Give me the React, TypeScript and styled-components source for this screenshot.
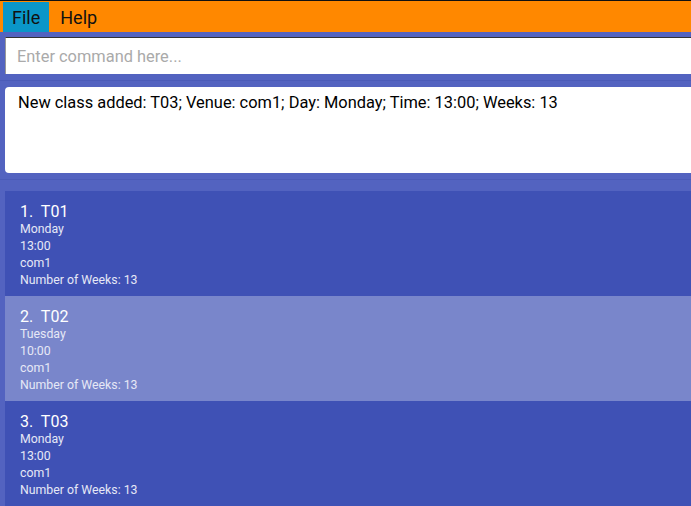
import React from "react";
import styled, { createGlobalStyle } from "styled-components";

const Global = createGlobalStyle`
  html, body { margin: 0; padding: 0; background: #5363c0; overflow: hidden; }
  body { font-family: Roboto, "Open Sans", sans-serif; }
`;

const Page = styled.div`
  width: 691px;
  height: 506px;
  display: flex;
  flex-direction: column;
  background: #5363c0;
  border-top: 1px solid #111;
  box-sizing: border-box;
  overflow: hidden;
`;

const MenuBar = styled.div`
  height: 30px;
  background: #ff8800;
  display: flex;
  align-items: stretch;
  padding-left: 3px;
  padding-top: 1px;
`;

const MenuItem = styled.div<{ $active?: boolean }>`
  display: flex;
  align-items: center;
  padding: 0 9px;
  margin-right: 2px;
  font-size: 18px;
  color: #111;
  background: ${(p) => (p.$active ? "#0a96c8" : "transparent")};
`;

const Section = styled.div`
  padding: 5px 0 0 5px;
  display: flex;
  flex-direction: column;
`;

const CommandBox = styled.div`
  height: 37px;
  background: #fff;
  border-top: 1px solid #333;
  border-left: 1px solid #999;
  box-sizing: border-box;
  display: flex;
  align-items: center;
  padding-left: 11px;
  font-size: 16.4px;
  color: #aaa;
`;

const Divider = styled.div<{ $top: number; $bottom: number }>`
  margin-top: ${(p) => p.$top}px;
  margin-bottom: ${(p) => p.$bottom}px;
  height: 1px;
  background: #4b5bb8;
`;

const ResultBox = styled.div`
  margin-left: 5px;
  height: 86px;
  background: #fff;
  border-radius: 4px 0 0 4px;
  padding: 6px 0 0 13px;
  box-sizing: border-box;
  font-size: 16.4px;
  color: #000;
`;

const List = styled.div`
  margin-left: 5px;
  display: flex;
  flex-direction: column;
  flex: 1;
  background: #3f51b5;
`;

const Item = styled.div<{ $selected?: boolean }>`
  height: 105px;
  box-sizing: border-box;
  padding: 11px 0 0 15px;
  background: ${(p) => (p.$selected ? "#7986cb" : "#3f51b5")};
  display: flex;
  flex-direction: column;
  flex-shrink: 0;
`;

const Title = styled.div`
  font-size: 16px;
  line-height: 19px;
  color: #fff;
  white-space: pre;
`;

const Detail = styled.div`
  font-size: 12.3px;
  line-height: 17px;
  color: #e6e8f6;
`;

const classes = [
  { id: "T01", day: "Monday", time: "13:00", venue: "com1", weeks: 13 },
  { id: "T02", day: "Tuesday", time: "10:00", venue: "com1", weeks: 13 },
  { id: "T03", day: "Monday", time: "13:00", venue: "com1", weeks: 13 },
];

export default function App() {
  return (
    <Page>
      <Global />
      <MenuBar>
        <MenuItem $active>File</MenuItem>
        <MenuItem>Help</MenuItem>
      </MenuBar>
      <Section>
        <CommandBox>Enter command here...</CommandBox>
      </Section>
      <Divider $top={6} $bottom={6} />
      <ResultBox>
        New class added: T03; Venue: com1; Day: Monday; Time: 13:00; Weeks: 13
      </ResultBox>
      <Divider $top={6} $bottom={11} />
      <List>
        {classes.map((c, i) => (
          <Item key={c.id} $selected={i === 1}>
            <Title>{`${i + 1}.  ${c.id}`}</Title>
            <Detail>{c.day}</Detail>
            <Detail>{c.time}</Detail>
            <Detail>{c.venue}</Detail>
            <Detail>Number of Weeks: {c.weeks}</Detail>
          </Item>
        ))}
      </List>
    </Page>
  );
}
